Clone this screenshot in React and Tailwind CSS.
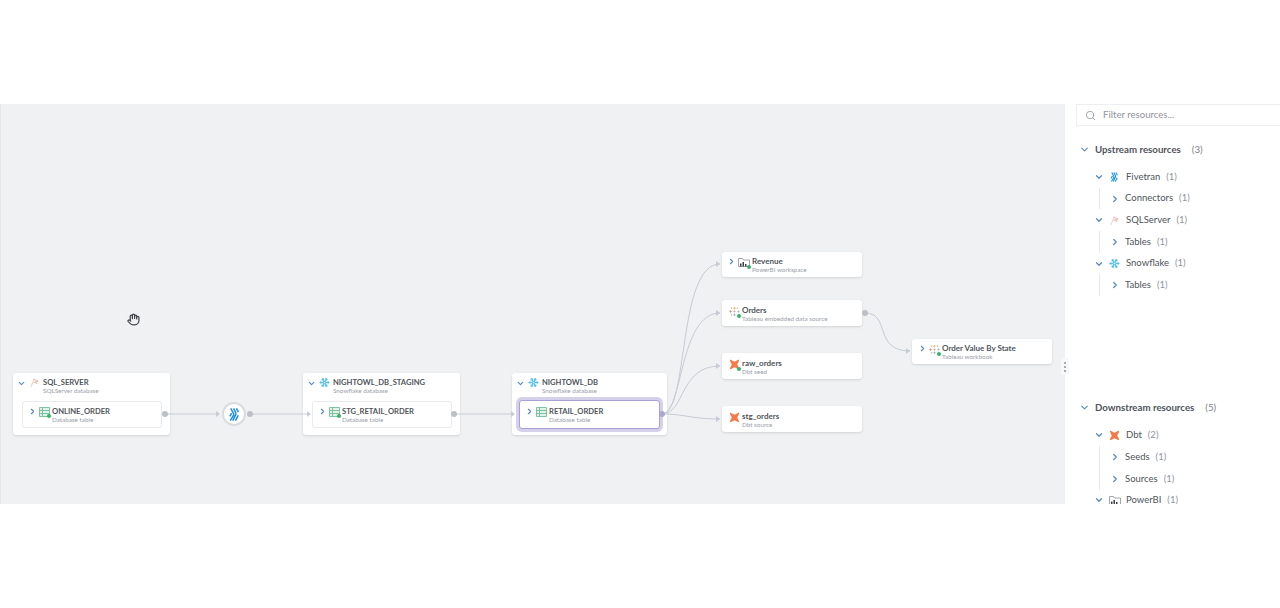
import { ChevronDown, ChevronRight, Hand, Search, Snowflake } from 'lucide-react'

const FivetranIcon = ({ className }) => (
  <svg viewBox="0 0 16 16" className={className} fill="none" stroke="#1a8cf0" strokeWidth="1.6">
    <path d="M4 1.500L7.500 8M7 1.500L9.800 7M10 1.500L12.200 5.500" />
    <path d="M7.500 8L3.500 14.500M9.800 7L6.200 14.500M12 9L9 14.500M5 6.500L3 10" />
  </svg>
)

const SqlIcon = ({ className }) => (
  <svg viewBox="0 0 16 16" className={className} fill="none" strokeLinecap="round">
    <path d="M3 14L7.500 3" stroke="#d3c6b8" strokeWidth="1" />
    <path d="M7 3.500l6.500 2.500-4.500.5 3 3-5-2" stroke="#e9a08c" strokeWidth="1" />
  </svg>
)

const DbtIcon = ({ className }) => (
  <svg viewBox="0 0 16 16" className={className} fill="#f47a4a">
    <path d="M1.500 3c-.8-1.200.3-2.200 1.500-1.500L8 4l5-2.500c1.200-.7 2.300.3 1.500 1.500L12 8l2.500 5c.8 1.200-.3 2.200-1.500 1.500L8 12l-5 2.500c-1.200.7-2.300-.3-1.500-1.500L4 8z" />
  </svg>
)

const Badge = () => <span className="absolute -right-[1px] -bottom-[1px] w-[4px] h-[4px] rounded-full bg-[#35b36b]" />

const TableIcon = ({ badge }) => (
  <span className="relative shrink-0 w-[11px] h-[10px]">
    <svg viewBox="0 0 11 10" className="w-[11px] h-[10px]" fill="#e2f2ea" stroke="#74bc99" strokeWidth="0.9">
      <path d="M.5.500h10v9H.5zM.5 3.500h10M.5 6.500h10M3.500.500v9" />
    </svg>
    {badge && <Badge />}
  </span>
)

const TableauIcon = ({ badge }) => (
  <span className="relative shrink-0 w-[11px] h-[11px]">
    <svg viewBox="0 0 11 11" className="w-[11px] h-[11px]" fill="none" strokeWidth="0.9" opacity="0.75">
      <path d="M5.500 1v2.500M4.250 2.250h2.500" stroke="#e8a33c" />
      <path d="M5.500 7.500V10M4.250 8.750h2.500" stroke="#7f9bc0" />
      <path d="M1.500 4.250v2.500M.25 5.500h2.500" stroke="#e0695e" />
      <path d="M9.500 4.250v2.500M8.250 5.500h2.500" stroke="#9aa7b5" />
      <path d="M5.500 4.500v2M4.500 5.500h2" stroke="#d8786a" />
      <path d="M2.500 1.500v1.500M1.750 2.250h1.500M8.500 1.500v1.500M7.750 2.250h1.500M2.500 8v1.500M1.750 8.750h1.500" stroke="#c9a98f" />
    </svg>
    {badge && <Badge />}
  </span>
)

const PowerBiIcon = ({ badge, className = 'w-[12px] h-[11px]' }) => (
  <span className={`relative shrink-0 ${className}`}>
    <svg viewBox="0 0 12 11" className={className} fill="none">
      <path d="M.5 9.500V1.500h4l1 1.500h6v6.500z" stroke="#8a8f96" strokeWidth="0.8" />
      <path d="M2 9.500h1.500V6.500H2zM4.500 9.500H6V5H4.500zM7 9.500h1.500V7H7z" fill="#3c4045" />
    </svg>
    {badge && <Badge />}
  </span>
)

const Labels = ({ title, sub }) => (
  <div className="min-w-0">
    <div className={`leading-[9px] font-bold text-[#50555c] whitespace-nowrap ${title === title.toUpperCase() ? 'text-[7.6px]' : 'text-[8px]'}`}>{title}</div>
    <div className="text-[6.3px] leading-[8px] text-[#9aa0a8] whitespace-nowrap">{sub}</div>
  </div>
)

const Expand = ({ open }) =>
  open ? (
    <ChevronDown className="w-[9px] h-[9px] text-[#5b88bd] shrink-0" strokeWidth={3} />
  ) : (
    <ChevronRight className="w-[9px] h-[9px] text-[#5b88bd] shrink-0" strokeWidth={3} />
  )

const GroupNode = ({ className, icon, title, sub, children }) => (
  <div className={`absolute top-[269px] h-[62px] bg-white rounded-[3px] shadow-sm ${className}`}>
    <div className="flex items-start gap-[3px] pl-[4px] pt-[4.5px]">
      <span className="mt-[1px]"><Expand open /></span>
      <span className="mt-[-1px]">{icon}</span>
      <Labels title={title} sub={sub} />
    </div>
    {children}
  </div>
)

const InnerNode = ({ icon, title, sub, className = '' }) => (
  <div className={`absolute bg-white rounded-[3px] flex items-start gap-[2px] pl-[5px] pt-[5px] ${className}`}>
    <Expand />
    {icon}
    <Labels title={title} sub={sub} />
  </div>
)

const FreeNode = ({ className, expand, icon, title, sub }) => (
  <div className={`absolute w-[140px] bg-white rounded-[3px] shadow-sm flex items-start gap-[2px] pt-[5px] ${expand ? 'pl-[5px]' : 'pl-[7px]'} ${className}`}>
    {expand && <Expand />}
    {icon}
    <Labels title={title} sub={sub} />
  </div>
)

const Dot = ({ className }) => <span className={`absolute top-[307px] w-[6px] h-[6px] rounded-full bg-[#bcc1c7] ${className}`} />

const Row = ({ depth, open, icon, label, count }) => (
  <div className={`h-[21.7px] flex items-center text-[9.5px] text-[#4f545b] ${depth === 1 ? 'pl-[35px] gap-[5px]' : 'pl-[11px] gap-[5px]'}`}>
    {open ? (
      <ChevronDown className="w-[10px] h-[10px] text-[#5b88bd] shrink-0 -ml-[1px]" strokeWidth={3} />
    ) : (
      <ChevronRight className="w-[10px] h-[10px] text-[#5b88bd] shrink-0 -ml-[1px]" strokeWidth={3} />
    )}
    {icon && <span className="w-[11px] flex justify-center">{icon}</span>}
    <span className={icon ? 'ml-[1px]' : ''}>{label}</span>
    <span className="ml-[1px] text-[#8f949b]">({count})</span>
  </div>
)

const Branch = ({ children }) => <div className="ml-[39px] border-l border-[#e6e8ea]">{children}</div>

const Section = ({ label, count, className, children }) => (
  <div className={`-ml-[5px] ${className}`}>
    <div className="h-[22px] flex items-center text-[9.7px] font-bold text-[#4f545b] pl-[20px]">
      <ChevronDown className="w-[11px] h-[11px] text-[#5b88bd] shrink-0 mr-[5px] -ml-[1px]" strokeWidth={2.5} />
      <span>{label}</span>
      <span className="font-normal text-[#7d828a] ml-[11px]">({count})</span>
    </div>
    <div className="mt-[6px]">{children}</div>
  </div>
)

export default function App() {
  return (
    <div className="h-[608px] bg-white overflow-hidden font-['Lato','Liberation_Sans',sans-serif]">
      <div className="relative mt-[104px] h-[400px] flex">
        {/* Lineage canvas */}
        <div className="relative w-[1065px] h-full bg-[#f0f1f2] border-l border-[#e6e7e9] overflow-hidden">
          <Hand className="absolute left-[126px] top-[209px] w-[13px] h-[13px] text-[#3f4348]" strokeWidth={2.2} />

          <GroupNode className="left-[12px] w-[157px]" icon={<SqlIcon className="w-[11px] h-[11px]" />} title="SQL_SERVER" sub="SQLServer database">
            <InnerNode className="left-[9px] top-[28px] w-[140px] h-[27px] border border-[#e9eaec]" icon={<TableIcon badge />} title="ONLINE_ORDER" sub="Database table" />
          </GroupNode>

          <div className="absolute left-[221px] top-[298px] w-[24px] h-[24px] rounded-full bg-white border-2 border-[#d9dcdf] flex items-center justify-center">
            <FivetranIcon className="w-[15px] h-[15px]" />
          </div>

          <GroupNode className="left-[302px] w-[157px]" icon={<Snowflake className="w-[11px] h-[11px] text-[#4fbfea]" strokeWidth={2.2} />} title="NIGHTOWL_DB_STAGING" sub="Snowflake database">
            <InnerNode className="left-[9px] top-[28px] w-[140px] h-[27px] border border-[#e9eaec]" icon={<TableIcon badge />} title="STG_RETAIL_ORDER" sub="Database table" />
          </GroupNode>

          <GroupNode className="left-[511px] w-[155px]" icon={<Snowflake className="w-[11px] h-[11px] text-[#4fbfea]" strokeWidth={2.2} />} title="NIGHTOWL_DB" sub="Snowflake database">
            <InnerNode className="left-[7px] top-[27px] w-[141px] h-[29px] border border-[#a99fd3] shadow-[0_0_0_3px_#d6d1eb] pt-[6px]!" icon={<TableIcon />} title="RETAIL_ORDER" sub="Database table" />
          </GroupNode>

          <FreeNode className="left-[721px] top-[148px] h-[25px]" expand icon={<PowerBiIcon badge />} title="Revenue" sub="PowerBI workspace" />
          <FreeNode className="left-[721px] top-[196px] h-[26px] pt-[6px]!" icon={<TableauIcon badge />} title="Orders" sub="Tableau embedded data source" />
          <FreeNode className="left-[721px] top-[249px] h-[26px] pt-[6px]!" icon={<span className="relative shrink-0"><DbtIcon className="w-[11px] h-[11px]" /><Badge /></span>} title="raw_orders" sub="Dbt seed" />
          <FreeNode className="left-[721px] top-[302px] h-[26px] pt-[6px]!" icon={<DbtIcon className="w-[11px] h-[11px] shrink-0" />} title="stg_orders" sub="Dbt source" />
          <FreeNode className="left-[911px] top-[235px] h-[25px] pl-[6px]!" expand icon={<TableauIcon badge />} title="Order Value By State" sub="Tableau workbook" />

          <svg className="absolute inset-0 w-[1065px] h-[400px] pointer-events-none" fill="none" stroke="#c5ccd4" strokeWidth="1">
            <path d="M163 310H217M248 310H308M452 310H512" />
            <path d="M661 310C688 310 676 160 719 160M661 310C682 310 678 209 719 209M661 310C684 310 678 262 719 262M661 310C684 310 690 315 719 315" />
            <path d="M864 209C890 209 872 247 909 247" />
            <path d="M215 307l4 3-4 3zM306 307l4 3-4 3zM510 307l4 3-4 3zM715 157l4 3-4 3zM715 206l4 3-4 3zM715 259l4 3-4 3zM715 312l4 3-4 3zM905 244l4 3-4 3z" fill="#c5ccd4" stroke="none" />
          </svg>

          <Dot className="left-[161px]" />
          <Dot className="left-[246px]" />
          <Dot className="left-[450px]" />
          <Dot className="left-[658px] bg-[#aea6d2]!" />
          <Dot className="left-[861px] top-[206px]!" />
        </div>

        {/* Resources sidebar */}
        <div className="flex-1 min-w-0 h-full overflow-hidden">
          <div className="ml-[11px] h-[22px] border border-[#eceef0] border-r-0 flex items-center pl-[8px] gap-[7px] text-[9.6px] text-[#8f949b]">
            <Search className="w-[11px] h-[11px] text-[#7c8187]" strokeWidth={1.5} />
            <span>Filter resources...</span>
          </div>

          <Section label="Upstream resources" count="3" className="mt-[12px] h-[258.5px]">
            <Row depth={1} open icon={<FivetranIcon className="w-[12px] h-[12px]" />} label="Fivetran" count="1" />
            <Branch><Row depth={2} label="Connectors" count="1" /></Branch>
            <Row depth={1} open icon={<SqlIcon className="w-[11px] h-[11px]" />} label="SQLServer" count="1" />
            <Branch><Row depth={2} label="Tables" count="1" /></Branch>
            <Row depth={1} open icon={<Snowflake className="w-[11px] h-[11px] text-[#4fbfea]" strokeWidth={2.2} />} label="Snowflake" count="1" />
            <Branch><Row depth={2} label="Tables" count="1" /></Branch>
          </Section>

          <Section label="Downstream resources" count="5">
            <Row depth={1} open icon={<DbtIcon className="w-[11px] h-[11px]" />} label="Dbt" count="2" />
            <Branch>
              <Row depth={2} label="Seeds" count="1" />
              <Row depth={2} label="Sources" count="1" />
            </Branch>
            <Row depth={1} open icon={<PowerBiIcon />} label="PowerBI" count="1" />
          </Section>
        </div>

        {/* Panel resize handle */}
        <div className="absolute left-[1061px] top-[254px] w-[8px] h-[17px] bg-[#f8f8f9] rounded-[2px] flex flex-col items-center justify-center gap-[2px]">
          <span className="w-[2px] h-[2px] rounded-full bg-[#8d9298]" />
          <span className="w-[2px] h-[2px] rounded-full bg-[#8d9298]" />
          <span className="w-[2px] h-[2px] rounded-full bg-[#8d9298]" />
        </div>
      </div>
    </div>
  )
}
